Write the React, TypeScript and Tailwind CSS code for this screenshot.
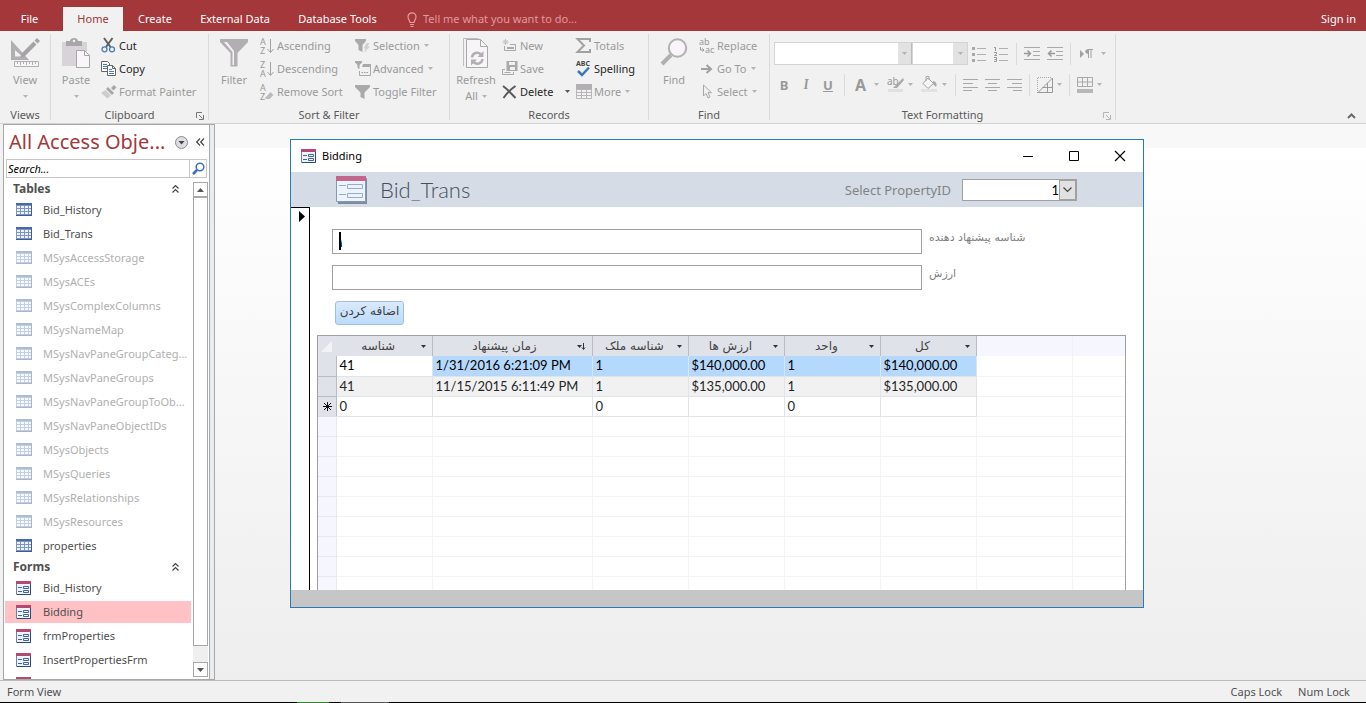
import clsx from "clsx";
import type { ReactNode } from "react";

const tables = [
  { name: "Bid_History" },
  { name: "Bid_Trans" },
  { name: "MSysAccessStorage", system: true },
  { name: "MSysACEs", system: true },
  { name: "MSysComplexColumns", system: true },
  { name: "MSysNameMap", system: true },
  { name: "MSysNavPaneGroupCateg...", system: true },
  { name: "MSysNavPaneGroups", system: true },
  { name: "MSysNavPaneGroupToOb...", system: true },
  { name: "MSysNavPaneObjectIDs", system: true },
  { name: "MSysObjects", system: true },
  { name: "MSysQueries", system: true },
  { name: "MSysRelationships", system: true },
  { name: "MSysResources", system: true },
  { name: "properties" },
];

const forms = ["Bid_History", "Bidding", "frmProperties", "InsertPropertiesFrm", ""];

const columns = ["شناسه", "زمان پیشنهاد", "شناسه ملک", "ارزش ها", "واحد", "کل"];

const rows = [
  ["41", "1/31/2016 6:21:09 PM", "1", "$140,000.00", "1", "$140,000.00"],
  ["41", "11/15/2015 6:11:49 PM", "1", "$135,000.00", "1", "$135,000.00"],
  ["0", "", "0", "", "0", ""],
];

const blankRows = [0, 1, 2, 3, 4, 5, 6, 7, 8];

/* ---------- icons ---------- */

const Svg = ({ w, h, children }: { w: number; h: number; children: ReactNode }) => (
  <svg width={w} height={h} viewBox={`0 0 ${w} ${h}`} fill="none" className="shrink-0 overflow-visible" aria-hidden="true">
    {children}
  </svg>
);

const Caret = ({ color = "#b4b4b4" }: { color?: string }) => (
  <Svg w={5} h={3}>
    <path d="M0 0h5L2.500 3z" fill={color} />
  </Svg>
);

const ViewIcon = () => (
  <Svg w={30} h={30}>
    <path d="M1 2v20h18zM5 12l7 6.500H5z" fill="#b1afb1" fillRule="evenodd" />
    <path d="M27 0l3 3-2.500 2.500-3-3zM23.500 3.500l3 3L15 18l-5 2 2-5z" fill="#a5a3a5" />
    <path d="M4.500 23.500h24v5h-24z" fill="#f6f4f6" stroke="#b1afb1" />
    <path d="M7.500 24v2M10.500 24v3M13.500 24v2M16.500 24v3M19.500 24v2M22.500 24v3M25.500 24v2" stroke="#b1afb1" />
  </Svg>
);

const PasteIcon = () => (
  <Svg w={30} h={30}>
    <path d="M1 4h25v24H1z" fill="#d8d3d8" />
    <path d="M5 8V3h4c0-4 8-4 8 0h4v5z" fill="#a9a6a9" />
    <circle cx="13" cy="3" r="1.300" fill="#f0f0f0" />
    <path d="M15.500 12.500h8l5 5v12h-13z" fill="#f8f6f8" stroke="#a9a6a9" />
    <path d="M23.500 12.500v5h5" stroke="#a9a6a9" />
  </Svg>
);

const CutIcon = () => (
  <Svg w={15} h={15}>
    <path d="M3 0l6.500 9M11.500 0L5 9" stroke="#5f5f5f" strokeWidth="2" />
    <circle cx="3.500" cy="11.300" r="2.500" stroke="#4b7bbd" strokeWidth="1.300" />
    <circle cx="11" cy="11.300" r="2.500" stroke="#4b7bbd" strokeWidth="1.300" />
  </Svg>
);

const CopyIcon = () => (
  <Svg w={16} h={15}>
    <path d="M.5.5h6l2 2v8h-8z" fill="#fff" stroke="#666" />
    <path d="M2 3.500h4M2 5.500h5M2 7.500h4" stroke="#4b7bbd" />
    <path d="M6.500 4.500h5l3 3v7h-8z" fill="#fff" stroke="#666" />
    <path d="M11.500 4.500v3h3" stroke="#666" />
    <path d="M8 8.500h3M8 10.500h5M8 12.500h5" stroke="#4b7bbd" />
  </Svg>
);

const PainterIcon = () => (
  <Svg w={16} h={14}>
    <path d="M13 0l2.500 2.500-3 3-2.500-2.500z" fill="#a9a6a9" />
    <path d="M7 2l6 6-2 2-6-6z" fill="#a9a6a9" />
    <path d="M4.500 5l5.500 5.500-3.500 3L0 8z" fill="#cfcbcf" />
  </Svg>
);

const FunnelIcon = () => (
  <Svg w={28} h={30}>
    <path d="M0 1h28v3L17.500 15v13.500h-7V15L0 4z" fill="#b1afb1" />
    <path d="M4 4h3l7 9v14h-1.500V14z" fill="#f3f1f3" />
  </Svg>
);

const SortIcon = ({ top, bottom, erase }: { top: string; bottom: string; erase?: boolean }) => (
  <Svg w={15} h={16}>
    <text x="1" y="7" fontSize="9" fontFamily="Noto Sans, sans-serif" fill="#999">{top}</text>
    <text x="1" y="15.500" fontSize="9" fontFamily="Noto Sans, sans-serif" fill="#999">{bottom}</text>
    {erase ? (
      <path d="M11.500 8l3 3-4 4H7l-1-1z" fill="#bdbabd" />
    ) : (
      <path d="M11.500 1v13M8.500 11l3 3.500 3-3.500" stroke="#a2a2a2" />
    )}
  </Svg>
);

const SelectionIcon = () => (
  <Svg w={16} h={14}>
    <path d="M0 0h11v2L7.500 6v7l-4-2V6L0 2z" fill="#aaa8aa" />
    <path d="M11.500 4h3l-2 3.500h2.500L9 14l1.500-4.500H8.500z" fill="#d2cfd2" />
  </Svg>
);

const AdvancedIcon = () => (
  <Svg w={16} h={15}>
    <path d="M0 0h7v1.500L4.500 4v4l-2-1V4L0 1.500z" fill="#aaa8aa" />
    <path d="M4.500 10v4.500h11v-11H8" stroke="#aaa8aa" />
    <path d="M8 3h8v3H7z" fill="#aaa8aa" />
    <path d="M6.500 11.500h1.500m1 0h1.500m1 0H13" stroke="#999" />
  </Svg>
);

const SmallFunnelIcon = () => (
  <Svg w={15} h={14}>
    <path d="M0 0h15v2L9.500 7.500V14l-4-2V7.500L0 2z" fill="#aaa8aa" />
  </Svg>
);

const RefreshIcon = () => (
  <Svg w={26} h={31}>
    <path d="M.5 28V.5h15" stroke="#c0bec0" />
    <path d="M3.500 1.500h14l7 7v21h-21z" fill="#f7f5f7" stroke="#aaa8aa" />
    <path d="M17.500 1.500v7h7" stroke="#aaa8aa" />
    <path d="M9 19.500c.5-5 6-6 9-3M19.500 21c-.5 5-6 6-9 3" stroke="#b1afb1" strokeWidth="2.500" />
    <path d="M20.500 13v6H14.500zM8 27.500v-6h6z" fill="#b1afb1" />
  </Svg>
);

const NewIcon = () => (
  <Svg w={15} h={13}>
    <path d="M3.500 0v6M.5 3h6M1.500 1l4 4M5.500 1l-4 4" stroke="#c3c0c3" />
    <path d="M2.500 7v4.500h11v-6H8" stroke="#aaa8aa" />
    <path d="M5 8h7v2H5z" fill="#aaa8aa" />
  </Svg>
);

const SaveIcon = () => (
  <Svg w={16} h={15}>
    <path d="M4.500 0h11v10h-11z" fill="#aaa8aa" />
    <path d="M7 1h6v3H7zM8 6h5v3H8z" fill="#f0f0f0" />
    <path d="M3 8.500H.5v5h11V11" stroke="#aaa8aa" />
    <path d="M2.500 11.500h6" stroke="#aaa8aa" />
  </Svg>
);

const DeleteIcon = () => (
  <Svg w={15} h={14}>
    <path d="M1 1c4 3 8 7 12.500 12M13.500 1C9 4 5 8 1.500 13" stroke="#595959" strokeWidth="2" />
  </Svg>
);

const SigmaIcon = () => (
  <Svg w={15} h={15}>
    <path d="M14 4V1H1.500L8 7.500 1.500 14H14v-3" stroke="#a2a0a2" strokeWidth="2" />
  </Svg>
);

const SpellingIcon = () => (
  <Svg w={15} h={17}>
    <text x="0" y="6" fontSize="7" fontWeight="700" fontFamily="Noto Sans, sans-serif" fill="#444">ABC</text>
    <path d="M2 11l4 4 7-7.500" stroke="#3f75b8" strokeWidth="2.500" />
  </Svg>
);

const MoreIcon = () => (
  <Svg w={16} h={15}>
    <path d="M.5.5h15v14H.5zM.5 5.500h15M.5 8.500h15M.5 11.500h15M5.500 5v9M10.500 5v9" stroke="#b8b6b8" />
    <path d="M0 0h16v5H0z" fill="#b1afb1" />
  </Svg>
);

const FindIcon = () => (
  <Svg w={28} h={28}>
    <circle cx="17.500" cy="10" r="8.700" fill="#f7f5f7" stroke="#b1afb1" strokeWidth="2" />
    <path d="M11 17L2 26" stroke="#b1afb1" strokeWidth="4" />
  </Svg>
);

const ReplaceIcon = () => (
  <Svg w={16} h={16}>
    <text x="0" y="7" fontSize="9" fontFamily="Noto Sans, sans-serif" fill="#999">ab</text>
    <text x="6" y="15" fontSize="9" fontFamily="Noto Sans, sans-serif" fill="#999">ac</text>
    <path d="M1.500 9v3H5M3.500 10.500L5 12l-1.500 1.500" stroke="#999" />
  </Svg>
);

const GoToIcon = () => (
  <Svg w={14} h={10}>
    <path d="M2 5h10M7.500 1l4.500 4-4.500 4" stroke="#a2a0a2" strokeWidth="2" />
  </Svg>
);

const PointerIcon = () => (
  <Svg w={14} h={15}>
    <path d="M4.500 1v11l2.500-2.500 2 4.500 2-1-2-4.300h3.500z" stroke="#a9a6a9" />
  </Svg>
);

const LauncherIcon = ({ color = "#777" }: { color?: string }) => (
  <Svg w={8} h={8}>
    <path d="M.5 6V.5H6M3 3l3.500 3.500M7.500 3v4.500H3" stroke={color} />
  </Svg>
);

const BulletsIcon = ({ numbered }: { numbered?: boolean }) => (
  <Svg w={15} h={16}>
    <path d="M5 2.500h9M5 8.500h9M5 14.500h9" stroke="#b1afb1" />
    {numbered ? (
      <path d="M0 1.500h1.500V5M0 6.500h2.500v1.500L.5 9.500h2.500M0 11.500h2.500v4H0M.5 13.500h2" stroke="#999" />
    ) : (
      <path d="M0 1h3v3H0zM0 7h3v3H0zM0 13h3v3H0z" fill="#aaa8aa" />
    )}
  </Svg>
);

const IndentIcon = ({ out }: { out?: boolean }) => (
  <Svg w={16} h={14}>
    <path d="M0 .5h16M9 4.500h7M9 8.500h7M0 12.500h16" stroke="#aaa8aa" />
    {out ? (
      <path d="M8 6.500H2M4.500 3.500l-3 3 3 3" stroke="#999" strokeWidth="1.500" />
    ) : (
      <path d="M0 6.500h6M3.500 3.500l3 3-3 3" stroke="#999" strokeWidth="1.500" />
    )}
  </Svg>
);

const ParagraphIcon = () => (
  <Svg w={13} h={10}>
    <path d="M0 1l4 4-4 4z" fill="#a2a0a2" />
    <path d="M8.500 1v8M11 1v8M13 .5H8.500" stroke="#a2a0a2" />
    <path d="M9 0v5C4 5 4 0 9 0z" fill="#a2a0a2" />
  </Svg>
);

const HighlightIcon = () => (
  <Svg w={17} h={17}>
    <text x="0" y="9" fontSize="10" fontFamily="Noto Sans, sans-serif" fill="#999">ab</text>
    <path d="M16 2L9 9l-3 3h4l7-8z" fill="#aaa8aa" />
    <path d="M1 13h15v3H1z" fill="#e3e0e3" />
  </Svg>
);

const FillIcon = () => (
  <Svg w={17} h={17}>
    <path d="M7 2l5.500 5.500L7 12.500 2 7.500z" fill="#f7f5f7" stroke="#a2a0a2" />
    <path d="M5 5V.5h3V4" stroke="#aaa8aa" />
    <path d="M12 5c4 1 4 4 3 6l-3-3z" fill="#aaa8aa" />
    <path d="M0 13h16v3H0z" fill="#e3e0e3" />
  </Svg>
);

const AlignIcon = ({ d }: { d: string }) => (
  <Svg w={15} h={12}>
    <path d={d} stroke="#aaa8aa" />
  </Svg>
);

const GridlinesIcon = () => (
  <Svg w={16} h={16}>
    <path d="M.5 16V.5H15" stroke="#aaa8aa" strokeDasharray="1 1" />
    <path d="M1 15.500h14.500V1zM15 10.500H5.500M10.500 15V6" stroke="#999" />
  </Svg>
);

const AltRowIcon = () => (
  <Svg w={16} h={16}>
    <path d="M.5.5h15v9H.5zM.5 5h15M5.500 1v8M10.500 1v8" stroke="#aaa8aa" />
    <path d="M0 12h16v4H0z" fill="#b8b6b8" />
  </Svg>
);

const TableIcon = ({ faded }: { faded?: boolean }) => (
  <span className={clsx("block pb-0.5", faded && "opacity-45")}>
    <Svg w={16} h={13}>
      <path d="M0 0h16v13H0z" fill="#3f5c96" />
      <path d="M0 0h15v12H0z" fill="#7d95c4" />
      <path d="M1 3h3v2H1zM5 3h3v2H5zM9 3h3v2H9zM13 3h2v2h-2zM1 6h3v2H1zM5 6h3v2H5zM9 6h3v2H9zM13 6h2v2h-2zM1 9h3v2H1zM5 9h3v2H5zM9 9h3v2H9zM13 9h2v2h-2z" fill="#eef4fd" />
      <path d="M0 0h16v2H0z" fill="#4a69a5" />
    </Svg>
  </span>
);

const FormIcon = () => (
  <Svg w={15} h={14}>
    <path d="M.5.5h14v13H.5z" fill="#eef3fc" stroke="#6c7fa8" />
    <path d="M14.500 3v10.500H1" stroke="#34496f" />
    <path d="M0 0h15v3H0z" fill="#b24a74" />
    <path d="M2 6.500h4M2 10.500h4M7.500 5.500h5v2h-5zM7.500 9.500h5v2h-5z" stroke="#41639e" />
  </Svg>
);

const BigFormIcon = () => (
  <Svg w={32} h={28}>
    <path d="M2 2h29v26H2z" fill="#7f8ba1" />
    <path d="M.5.5h29v25H.5z" fill="#eef3fc" stroke="#8398bd" />
    <path d="M0 0h30v5H0z" fill="#c4668c" />
    <path d="M3 9.500h7M3 18.500h7M11.500 8.500h15v4h-15zM11.500 17.500h15v4h-15z" stroke="#8fadd8" />
  </Svg>
);

const CollapseIcon = () => (
  <Svg w={7} h={8}>
    <path d="M.5 3.500l3-3 3 3M.5 7.500l3-3 3 3" stroke="#444" strokeWidth="1.200" />
  </Svg>
);

/* ---------- ribbon ---------- */

const Group = ({ label, width, launcher, children }: { label: string; width: string; launcher?: string; children: ReactNode }) => (
  <section className={clsx("relative my-[3px] flex shrink-0 flex-col justify-between border-r border-[#dadada]", width)}>
    <div className="flex">{children}</div>
    <h2 className="text-center text-[11px] leading-[10px] text-[#5a5a5a]">{label}</h2>
    {launcher && (
      <button className="absolute right-1 bottom-0" aria-label={`${label} settings`}>
        <LauncherIcon color={launcher} />
      </button>
    )}
  </section>
);

const BigButton = ({ icon, label, width, menu }: { icon: ReactNode; label: string; width: string; menu?: boolean }) => (
  <button className={clsx("flex shrink-0 flex-col items-center pt-1 text-[#9a9a9a]", width)}>
    <span className="flex h-[34px] items-start">{icon}</span>
    <span className="leading-4">{label}</span>
    {menu && (
      <span className="flex h-4 items-center">
        <Caret />
      </span>
    )}
  </button>
);

const RibbonButton = ({ icon, label, enabled, menu }: { icon: ReactNode; label: string; enabled?: boolean; menu?: boolean }) => (
  <button className={clsx("flex h-[23px] items-center whitespace-nowrap", enabled ? "text-[#262626]" : "text-[#9a9a9a]")}>
    <span className="flex w-[18px] shrink-0">{icon}</span>
    <span>{label}</span>
    {menu && (
      <span className={enabled ? "ml-3" : "ml-1"}>
        <Caret color={enabled ? "#555" : undefined} />
      </span>
    )}
  </button>
);

const Divider = () => <span className="h-[22px] w-px bg-[#dadada]" />;

const Ribbon = () => (
  <div className="flex h-[93px] shrink-0 border-b border-[#d2d2d2] bg-[#f1f1f1]">
    <Group label="Views" width="w-[51px]">
      <BigButton icon={<ViewIcon />} label="View" width="w-[50px]" menu />
    </Group>
    <Group label="Clipboard" width="w-[158px]" launcher="#777">
      <BigButton icon={<PasteIcon />} label="Paste" width="w-[50px]" menu />
      <div>
        <RibbonButton icon={<CutIcon />} label="Cut" enabled />
        <RibbonButton icon={<CopyIcon />} label="Copy" enabled />
        <RibbonButton icon={<PainterIcon />} label="Format Painter" />
      </div>
    </Group>
    <Group label="Sort &amp; Filter" width="w-[241px]">
      <BigButton icon={<FunnelIcon />} label="Filter" width="w-[50px]" />
      <div className="w-24">
        <RibbonButton icon={<SortIcon top="A" bottom="Z" />} label="Ascending" />
        <RibbonButton icon={<SortIcon top="Z" bottom="A" />} label="Descending" />
        <RibbonButton icon={<SortIcon top="A" bottom="Z" erase />} label="Remove Sort" />
      </div>
      <div>
        <RibbonButton icon={<SelectionIcon />} label="Selection" menu />
        <RibbonButton icon={<AdvancedIcon />} label="Advanced" menu />
        <RibbonButton icon={<SmallFunnelIcon />} label="Toggle Filter" />
      </div>
    </Group>
    <Group label="Records" width="w-[199px]">
      <button className="flex w-[52px] shrink-0 flex-col items-center pt-1 text-[#9a9a9a]">
        <span className="flex h-[34px] items-start">
          <RefreshIcon />
        </span>
        <span className="leading-4">Refresh</span>
        <span className="flex items-center gap-1 leading-4">
          All <Caret />
        </span>
      </button>
      <div className="w-[74px]">
        <RibbonButton icon={<NewIcon />} label="New" />
        <RibbonButton icon={<SaveIcon />} label="Save" />
        <RibbonButton icon={<DeleteIcon />} label="Delete" enabled menu />
      </div>
      <div>
        <RibbonButton icon={<SigmaIcon />} label="Totals" />
        <RibbonButton icon={<SpellingIcon />} label="Spelling" enabled />
        <RibbonButton icon={<MoreIcon />} label="More" menu />
      </div>
    </Group>
    <Group label="Find" width="w-[121px]">
      <BigButton icon={<FindIcon />} label="Find" width="w-[50px]" />
      <div>
        <RibbonButton icon={<ReplaceIcon />} label="Replace" />
        <RibbonButton icon={<GoToIcon />} label="Go To" menu />
        <RibbonButton icon={<PointerIcon />} label="Select" menu />
      </div>
    </Group>
    <Group label="Text Formatting" width="w-[346px]" launcher="#b4b4b4">
      <div className="flex flex-col gap-2 pt-2 pl-1">
        <div className="flex h-[23px] items-center">
          <div className="flex h-full w-[139px] border border-[#d4d4d4] bg-white">
            <input aria-label="Font" className="min-w-0 flex-1 outline-none" />
            <button aria-label="Font list" className="flex w-[14px] items-center justify-center border-r border-[#bbb] bg-[#e2e2e2]">
              <Caret />
            </button>
          </div>
          <div className="flex h-full w-[55px] border border-l-0 border-[#d4d4d4] bg-white">
            <input aria-label="Font size" className="min-w-0 flex-1 outline-none" />
            <button aria-label="Font size list" className="flex w-[14px] items-center justify-center bg-[#e2e2e2]">
              <Caret />
            </button>
          </div>
          <div className="flex items-center gap-[7px] pl-1">
            <button aria-label="Bullets"><BulletsIcon /></button>
            <button aria-label="Numbering"><BulletsIcon numbered /></button>
            <Divider />
            <button aria-label="Increase indent"><IndentIcon /></button>
            <button aria-label="Decrease indent"><IndentIcon out /></button>
            <Divider />
            <button aria-label="Text direction" className="flex items-center gap-2 pl-0.5">
              <ParagraphIcon />
              <Caret />
            </button>
          </div>
        </div>
        <div className="flex h-[23px] items-center text-[13px] text-[#999]">
          <button className="w-5 font-bold">B</button>
          <button className="w-6 font-serif font-bold italic">I</button>
          <button className="w-5 font-bold underline">U</button>
          <span className="flex pl-1.5">
            <Divider />
          </span>
          <button aria-label="Font color" className="flex w-[34px] items-center justify-between pl-2.5">
            <span className="text-base leading-4 font-bold">A</span>
            <Caret />
          </button>
          <button aria-label="Highlight" className="flex w-[34px] items-center justify-between pl-2">
            <HighlightIcon />
            <Caret />
          </button>
          <button aria-label="Background color" className="flex w-[34px] items-center justify-between pl-2">
            <FillIcon />
            <Caret />
          </button>
          <div className="flex items-center gap-[7px] pl-2">
            <Divider />
            <button aria-label="Align left"><AlignIcon d="M0 .5h15M0 4.500h10M0 8.500h15M0 11.500h9" /></button>
            <button aria-label="Center"><AlignIcon d="M0 .5h15M3 4.500h9M0 8.500h15M3 11.500h9" /></button>
            <button aria-label="Align right"><AlignIcon d="M0 .5h15M5 4.500h10M0 8.500h15M6 11.500h9" /></button>
            <Divider />
            <button aria-label="Gridlines" className="flex items-center gap-1"><GridlinesIcon /><Caret /></button>
            <Divider />
            <button aria-label="Alternate row color" className="flex items-center gap-1"><AltRowIcon /><Caret /></button>
          </div>
        </div>
      </div>
    </Group>
    <button className="mt-auto mr-[10px] mb-1 ml-auto" aria-label="Collapse the ribbon">
      <Svg w={9} h={6}>
        <path d="M1 5l3.500-3.500L8 5" stroke="#6a6a6a" strokeWidth="2" />
      </Svg>
    </button>
  </div>
);

const TitleBar = () => (
  <header className="flex h-[31px] shrink-0 items-end bg-[#a4373a] text-white">
    <button className="h-6 w-[63px] pr-1">File</button>
    <nav className="flex">
      <button className="h-6 w-[60px] bg-[#f1f1f1] text-[#a4373a]">Home</button>
      <button className="h-6 w-[64px]">Create</button>
      <button className="h-6 w-24">External Data</button>
      <button className="h-6 w-[109px]">Database Tools</button>
    </nav>
    <label className="ml-[15px] flex h-6 flex-1 items-center gap-1.5">
      <Svg w={10} h={15}>
        <path d="M3 10.500C3 8.500 1 7.500 1 4.800a4 4 0 018 0C9 7.500 7 8.500 7 10.500zM3 12.500h4M3.500 14.500h3" stroke="#eb9a9c" strokeWidth="1.200" />
      </Svg>
      <input placeholder="Tell me what you want to do..." className="w-56 bg-transparent outline-none placeholder:text-[#e09a9c]" />
    </label>
    <button className="h-6 pr-[10px]">Sign in</button>
  </header>
);

/* ---------- navigation pane ---------- */

const SectionHeader = ({ title }: { title: string }) => (
  <button className="flex h-[18px] w-full items-center justify-between pr-3 pl-2 text-xs font-bold text-[#505050]">
    {title}
    <CollapseIcon />
  </button>
);

const NavItem = ({ name, icon, faded, active }: { name: string; icon: ReactNode; faded?: boolean; active?: boolean }) => (
  <li className="h-6 py-px">
    <a
      href="#"
      className={clsx(
        "flex h-[22px] items-center gap-[11px] pl-[11px] whitespace-nowrap",
        faded ? "text-[#b0b0b0]" : "text-[#505050]",
        active && "bg-[#ffc1c3]",
      )}
    >
      <span className="w-4">{icon}</span>
      {name}
    </a>
  </li>
);

const NavPane = () => (
  <aside className="ml-[3px] flex w-[212px] shrink-0 border border-[#a8a8a8] bg-[#e9edf2] pr-1">
    <div className="flex min-w-0 flex-1 flex-col border-r border-[#a8a8a8] bg-white">
      <div className="flex h-[34px] shrink-0 items-center justify-between pr-1 pl-[5px]">
        <h1 className="text-xl whitespace-nowrap text-[#a4373a]">All Access Obje...</h1>
        <div className="flex items-center gap-2">
          <button aria-label="Choose category">
            <Svg w={13} h={13}>
              <circle cx="6.500" cy="6.500" r="6" fill="#dcdce2" stroke="#8b8b90" />
              <path d="M3.500 5h6l-3 3.500z" fill="#444" />
            </Svg>
          </button>
          <button aria-label="Hide pane">
            <Svg w={9} h={8}>
              <path d="M4 .5L.7 4 4 7.500M8 .5L4.700 4 8 7.500" stroke="#444" strokeWidth="1.200" />
            </Svg>
          </button>
        </div>
      </div>
      <div className="mx-0.5 flex h-[19px] shrink-0 border border-[#c6c6c6]">
        <input aria-label="Search" placeholder="Search..." className="min-w-0 flex-1 px-px italic outline-none placeholder:text-black" />
        <button aria-label="Go" className="flex w-[17px] items-center justify-center border-l border-[#c6c6c6]">
          <Svg w={13} h={13}>
            <circle cx="8" cy="5" r="3.800" stroke="#3d6fb5" strokeWidth="1.500" />
            <path d="M5 8l-4 4" stroke="#3d6fb5" strokeWidth="2.500" />
          </Svg>
        </button>
      </div>
      <div className="flex min-h-0 flex-1 pt-0.5">
        <div className="min-w-0 flex-1 overflow-hidden pl-px">
          <SectionHeader title="Tables" />
          <ul>
            {tables.map((t) => (
              <NavItem key={t.name} name={t.name} icon={<TableIcon faded={t.system} />} faded={t.system} />
            ))}
          </ul>
          <SectionHeader title="Forms" />
          <ul>
            {forms.map((name) => (
              <NavItem key={name} name={name} icon={<FormIcon />} active={name === "Bidding"} />
            ))}
          </ul>
        </div>
        <div className="mt-0.5 mr-px mb-0.5 ml-0.5 flex w-[15px] shrink-0 flex-col bg-[#efefef]">
          <button aria-label="Scroll up" className="flex h-[15px] items-center justify-center border border-[#a8a8a8] bg-white">
            <Svg w={7} h={4}>
              <path d="M0 4h7L3.500 0z" fill="#555" />
            </Svg>
          </button>
          <div className="mb-4 flex-1 border border-[#a8a8a8] bg-white" />
          <button aria-label="Scroll down" className="flex h-[15px] items-center justify-center border border-[#a8a8a8] bg-white">
            <Svg w={7} h={4}>
              <path d="M0 0h7L3.500 4z" fill="#555" />
            </Svg>
          </button>
        </div>
      </div>
    </div>
  </aside>
);

/* ---------- form window ---------- */

const Datasheet = () => (
  <div className="mr-[17px] ml-[7px] min-h-0 flex-1 overflow-hidden border border-b-0 border-[#a0a0a0]">
    <table className="w-full table-fixed border-collapse font-[Lato,sans-serif] text-[13px] text-[#262626]">
      <colgroup>
        <col className="w-[18px]" />
        <col className="w-24" />
        <col className="w-40" />
        <col className="w-24" />
        <col className="w-24" />
        <col className="w-24" />
        <col className="w-24" />
        <col className="w-24" />
        <col />
      </colgroup>
      <thead>
        <tr className="h-5 bg-[#dfe2e8]">
          <th className="p-0">
            <span className="flex justify-end pr-1">
              <Svg w={11} h={11}>
                <path d="M11 0v11H0z" fill="#f1f3f6" />
              </Svg>
            </span>
          </th>
          {columns.map((c, i) => (
            <th key={c} className="border-r border-[#b9bcc2] p-0 text-xs font-normal text-[#444]">
              <span className="flex items-center pr-1.5 font-['DejaVu_Sans',sans-serif]">
                <span dir="rtl" className="flex-1 leading-4">{c}</span>
                {i === 1 ? (
                  <Svg w={9} h={7}>
                    <path d="M0 2h5L2.500 5z" fill="#333" />
                    <path d="M6.500 0v6M5 4.500l1.500 2L8 4.500" stroke="#333" />
                  </Svg>
                ) : (
                  <Caret color="#333" />
                )}
              </span>
            </th>
          ))}
          <th className="border-r border-[#f1f1f5] bg-[#f6f7fe]" />
          <th className="bg-[#f6f7fe]" />
        </tr>
      </thead>
      <tbody>
        {rows.map((row, r) => (
          <tr key={r} className={clsx("h-5", r === 0 && "bg-[#b5d8fd] text-black", r === 1 && "bg-[#f1f1f1]")}>
            <td className={clsx("border-r border-b border-[#b9bcc2] bg-[#dfe2e8] p-0 text-center", r === 2 && "border-b-[#dcdfe6]")}>
              {r === 2 && (
                <Svg w={17} h={11}>
                  <path d="M9.500 1v9M5 5.500h9M6 2l7 7M13 2L6 9" stroke="#111" />
                </Svg>
              )}
            </td>
            {row.map((cell, c) => (
              <td key={c} className={clsx("border-r border-b border-[#dfe3ea] px-[3px] py-0 leading-[19px] whitespace-nowrap", r === 0 && c === 0 && "bg-white")}>
                {cell}
              </td>
            ))}
            <td className="border-r border-b border-[#f4f4f6] bg-white" />
            <td className="border-b border-[#f4f4f6] bg-white" />
          </tr>
        ))}
        {blankRows.map((r) => (
          <tr key={r} className="h-5">
            <td className="border-r border-b border-[#e6e8f2] bg-[#f6f7fe]" />
            {[0, 1, 2, 3, 4, 5, 6, 7].map((c) => (
              <td key={c} className="border-r border-b border-[#f4f4f6] last:border-r-0" />
            ))}
          </tr>
        ))}
      </tbody>
    </table>
  </div>
);

const FormWindow = () => (
  <section className="flex min-w-0 flex-1 flex-col border border-[#2a7ab5] bg-white">
    <div className="flex h-8 shrink-0 items-center pl-[10px] text-black">
      <FormIcon />
      <h2 className="flex-1 pl-1.5">Bidding</h2>
      <button aria-label="Minimize" className="flex w-[46px] justify-center">
        <Svg w={10} h={10}><path d="M0 5.500h10" stroke="#000" /></Svg>
      </button>
      <button aria-label="Maximize" className="flex w-[46px] justify-center">
        <Svg w={10} h={10}><path d="M.5.5h9v9h-9z" stroke="#000" /></Svg>
      </button>
      <button aria-label="Close" className="flex w-[46px] justify-center">
        <Svg w={10} h={10}><path d="M0 0l10 10M10 0L0 10" stroke="#000" strokeWidth="1.200" /></Svg>
      </button>
    </div>
    <div className="flex h-[35px] shrink-0 items-center bg-[#d6dce5] pr-[66px] pl-[45px]">
      <BigFormIcon />
      <h3 className="flex-1 pl-3 font-[Lato,sans-serif] text-[22px] font-light text-[#44505f]">Bid_Trans</h3>
      <label htmlFor="property" className="pr-[11px] text-[13px] text-[#7f8388]">Select PropertyID</label>
      <div className="flex h-[22px] w-[115px] border border-[#a0a0a0] bg-white">
        <select id="property" dir="ltr" className="min-w-0 flex-1 appearance-none text-right font-[Lato,sans-serif] text-[13px] text-black [text-align-last:right]">
          <option>1</option>
        </select>
        <span className="flex w-[17px] items-center justify-center border border-[#a0a0a0] bg-[#e1e1e1]">
          <Svg w={9} h={6}><path d="M.5.5l4 4 4-4" stroke="#444" strokeWidth="1.200" /></Svg>
        </span>
      </div>
    </div>
    <div className="flex min-h-0 flex-1">
      <div className="w-[19px] shrink-0 border-t border-r border-black pt-[3px] pl-2">
        <Svg w={6} h={11}><path d="M0 0l6 5.500L0 11z" fill="#000" /></Svg>
      </div>
      <div className="flex min-w-0 flex-1 flex-col pt-[22px]">
        <div className="flex flex-col gap-[11px] pl-[22px] text-[#7f7f7f]">
          <div className="relative flex gap-[7px]">
            <input id="bidder" defaultValue="۱" className="h-[25px] min-w-0 flex-1 border border-[#a0a0a0] px-1 font-['DejaVu_Sans',sans-serif] text-sm text-black outline-none" />
            {/* text cursor */}
            <span className="absolute top-[3px] left-[7px] h-[18px] w-0.5 bg-black" />
            <label htmlFor="bidder" dir="rtl" className="w-[214px] text-left font-['DejaVu_Sans',sans-serif] leading-[18px]">شناسه پیشنهاد دهنده</label>
          </div>
          <div className="flex gap-[7px]">
            <input id="value" className="h-[25px] min-w-0 flex-1 border border-[#a0a0a0] px-1 outline-none" />
            <label htmlFor="value" dir="rtl" className="w-[214px] text-left font-['DejaVu_Sans',sans-serif] leading-[18px]">ارزش</label>
          </div>
        </div>
        <button dir="rtl" className="mt-[11px] mb-[10px] ml-[25px] h-6 w-[69px] shrink-0 rounded-[3px] border border-[#9dbfe4] bg-linear-to-b from-[#d9eafc] to-[#bcdbfb] pb-1 font-['DejaVu_Sans',sans-serif] text-xs leading-4 whitespace-nowrap text-[#404040]">
          اضافه کردن
        </button>
        <Datasheet />
      </div>
    </div>
    <div className="h-[17px] shrink-0 bg-[#c6c6c6]" />
  </section>
);

const App = () => {
  return (
    <div className="flex h-screen min-h-[600px] flex-col overflow-hidden bg-[#f1f1f1] font-['Noto_Sans',sans-serif] text-[11px] leading-4 text-[#444]">
      <TitleBar />
      <Ribbon />
      <div className="flex min-h-0 flex-1">
        <NavPane />
        <main className="flex min-w-0 flex-1 bg-linear-to-b from-[#f8f8f8] from-[24px] via-white via-[24px] to-[#eeeeee] pt-[15px] pr-[222px] pb-[72px] pl-[75px]">
          <FormWindow />
        </main>
      </div>
      <footer className="flex h-[22px] shrink-0 items-center border-t border-[#bdbdbd] px-[7px] text-[#505050]">
        <span className="flex-1">Form View</span>
        <span className="pr-4">Caps Lock</span>
        <span className="pr-[9px]">Num Lock</span>
      </footer>
      <div className="flex h-px shrink-0 gap-3 bg-black pl-[297px]">
        <span className="w-8 bg-[#2f8a2f]" />
        <span className="w-12 bg-[#555]" />
      </div>
    </div>
  );
};

export default App;
